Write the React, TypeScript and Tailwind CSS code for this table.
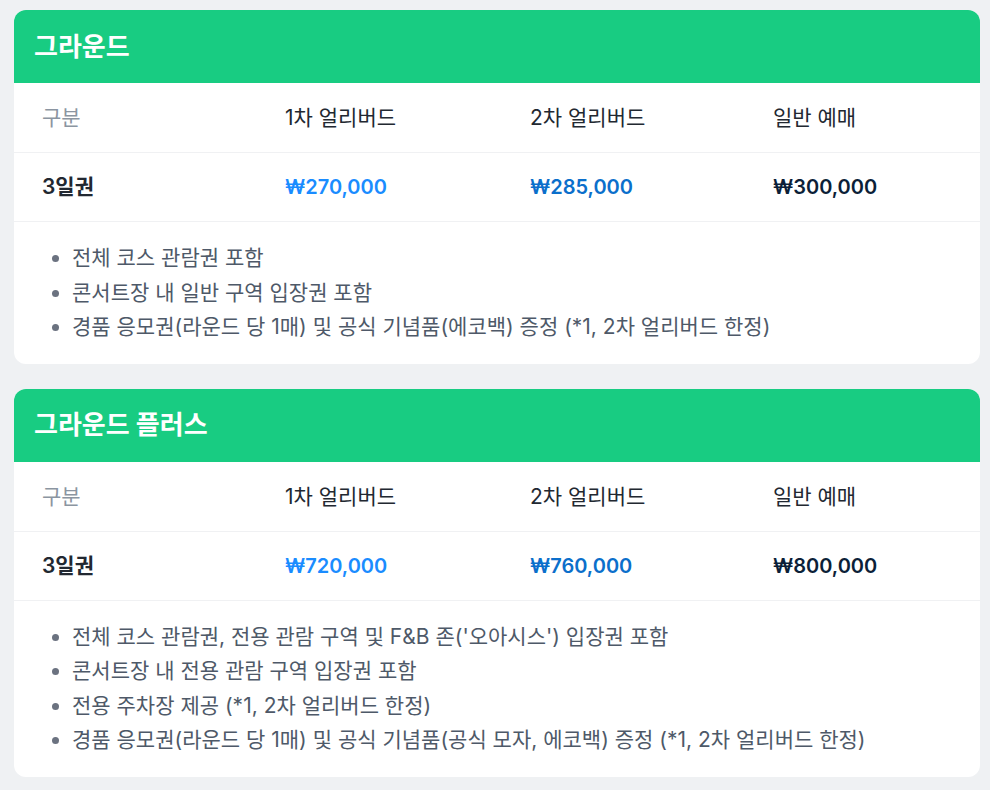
import React from 'react';

type Plan = {
  title: string;
  prices: [string, string, string];
  notes: string[];
};

const plans: Plan[] = [
  {
    title: '그라운드',
    prices: ['₩270,000', '₩285,000', '₩300,000'],
    notes: [
      '전체 코스 관람권 포함',
      '콘서트장 내 일반 구역 입장권 포함',
      '경품 응모권(라운드 당 1매) 및 공식 기념품(에코백) 증정 (*1, 2차 얼리버드 한정)',
    ],
  },
  {
    title: '그라운드 플러스',
    prices: ['₩720,000', '₩760,000', '₩800,000'],
    notes: [
      "전체 코스 관람권, 전용 관람 구역 및 F&B 존('오아시스') 입장권 포함",
      '콘서트장 내 전용 관람 구역 입장권 포함',
      '전용 주차장 제공 (*1, 2차 얼리버드 한정)',
      '경품 응모권(라운드 당 1매) 및 공식 기념품(공식 모자, 에코백) 증정 (*1, 2차 얼리버드 한정)',
    ],
  },
];

const PriceCard = ({ plan }: { plan: Plan }) => {
  return (
    <section className="overflow-hidden rounded-xl bg-white">
      {/* 카드 헤더 */}
      <div className="flex h-[73px] items-center bg-[#18cc82] px-5">
        <h2 className="text-[26px] font-bold leading-8 text-white">{plan.title}</h2>
      </div>

      {/* 가격 표 */}
      <div className="grid grid-cols-[243px_245px_243px_1fr] border-b border-[#f0f1f3] pl-7 text-[21px] leading-[29px]">
        <div className="py-5 text-[#8b95a1]">구분</div>
        <div className="py-5 text-[#222831]">1차 얼리버드</div>
        <div className="py-5 text-[#222831]">2차 얼리버드</div>
        <div className="py-5 text-[#222831]">일반 예매</div>
      </div>
      <div className="grid grid-cols-[243px_245px_243px_1fr] border-b border-[#f0f1f3] pl-7 font-semibold leading-7">
        <div className="py-5 text-[21px] text-[#222831]">3일권</div>
        <div className="py-5 text-[20px] text-[#1a8cff]">{plan.prices[0]}</div>
        <div className="py-5 text-[20px] text-[#0b6fcb]">{plan.prices[1]}</div>
        <div className="py-5 text-[20px] text-[#0c1f38]">{plan.prices[2]}</div>
      </div>

      {/* 혜택 목록 */}
      <ul className="list-disc pb-[19px] pl-[58px] pt-[19px] text-[21px] leading-[34.5px] text-[#4e5968] marker:text-[#6b7280]">
        {plan.notes.map((note) => (
          <li key={note}>{note}</li>
        ))}
      </ul>
    </section>
  );
};

export default function App() {
  return (
    <div
      className="min-h-[790px] bg-[#eff1f3] pl-[14px] pr-[10px] pt-[10px]"
      style={{ fontFamily: 'Inter, "Noto Sans CJK KR", sans-serif' }}
    >
      <div className="flex flex-col gap-[25px]">
        {plans.map((plan) => (
          <PriceCard key={plan.title} plan={plan} />
        ))}
      </div>
    </div>
  );
}
